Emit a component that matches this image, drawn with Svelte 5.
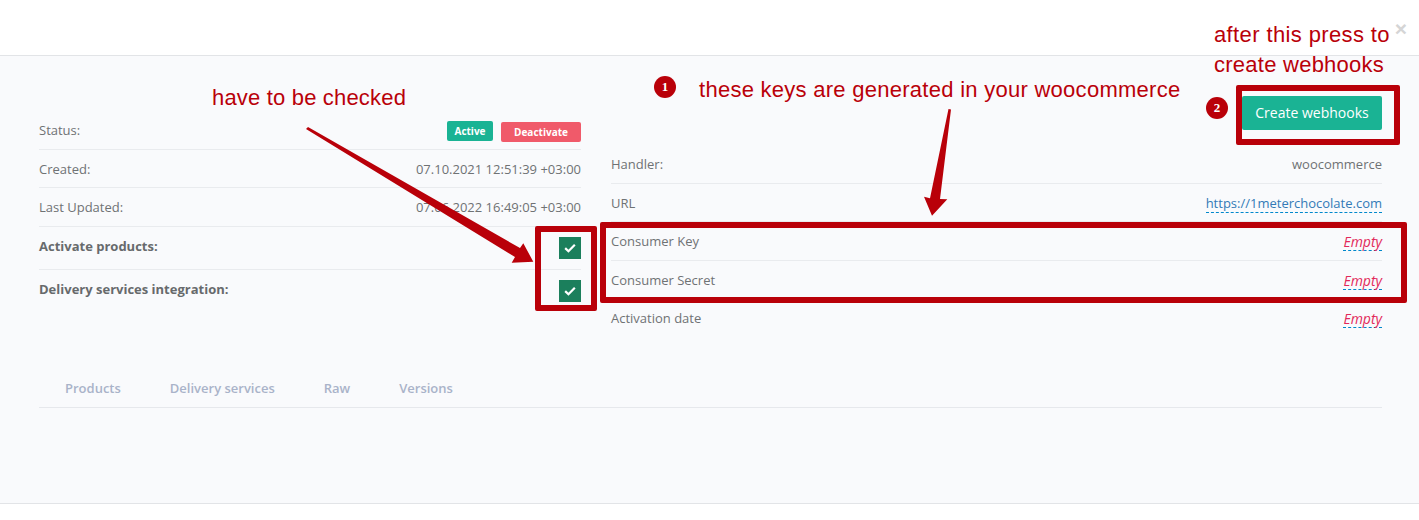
<script>
  const leftRows = [
    { label: "Created:", value: "07.10.2021 12:51:39 +03:00" },
    { label: "Last Updated:", value: "07.06.2022 16:49:05 +03:00" }
  ];
  const checks = ["Activate products:", "Delivery services integration:"];
  const emptyRows = ["Consumer Key", "Consumer Secret", "Activation date"];
  const tabs = ["Products", "Delivery services", "Raw", "Versions"];
</script>

<div class="modal">
  <header class="head">
    <button class="close">×</button>
  </header>

  <main class="body">
    <section class="info">
      <div class="col left">
        <div class="row">
          <span>Status:</span>
          <span class="badges">
            <span class="badge active">Active</span>
            <span class="badge deactivate">Deactivate</span>
          </span>
        </div>
        {#each leftRows as row}
          <div class="row">
            <span>{row.label}</span>
            <span>{row.value}</span>
          </div>
        {/each}
        {#each checks as label}
          <div class="row tall">
            <strong>{label}</strong>
            <span class="check">
              <svg width="12" height="10" viewBox="0 0 13 11">
                <path d="M1.2 5.600 L4.800 9 L11.800 1.800" fill="none" stroke="#fff" stroke-width="2.400" />
              </svg>
            </span>
          </div>
        {/each}
      </div>

      <div class="col right">
        <div class="actions">
          <button class="create">Create webhooks</button>
        </div>
        <div class="row">
          <span>Handler:</span>
          <span>woocommerce</span>
        </div>
        <div class="row">
          <span>URL</span>
          <span class="editable link">https://1meterchocolate.com</span>
        </div>
        {#each emptyRows as label}
          <div class="row">
            <span>{label}</span>
            <span class="editable empty">Empty</span>
          </div>
        {/each}
      </div>
    </section>

    <nav class="tabs">
      {#each tabs as tab}
        <span class="tab">{tab}</span>
      {/each}
    </nav>
  </main>

  <!-- annotations painted over the screenshot -->
  <svg class="arrows" width="1419" height="520" viewBox="0 0 1419 520">
    <path d="M306 129 L308 127 L520 248 L523.300 243.300 L533.300 261.700 L511.700 262.700 L515 257 Z" fill="#b90009" />
    <path d="M948.500 109 L951 109.500 L940 199 L947.300 199.300 L932 215.700 L924 196.700 L930 198.300 Z" fill="#b90009" />
  </svg>
  <div class="box box-checks"></div>
  <div class="box box-keys"></div>
  <div class="box box-create"></div>
  <span class="note note-checked">have to be checked</span>
  <span class="note note-keys">these keys are generated in your woocommerce</span>
  <span class="note note-after">after this press to<br /><span class="second">create webhooks</span></span>
  <span class="dot dot-1">1</span>
  <span class="dot dot-2">2</span>
</div>

<style>
  :global(body) {
    background: #fff;
  }

  .modal {
    position: relative;
    width: 1419px;
    height: 520px;
    overflow: hidden;
    font-family: "Open Sans", sans-serif;
    font-size: 13px;
    color: #676a6c;
  }

  .head {
    height: 55px;
    border-bottom: 1px solid #e2e4e7;
    display: flex;
    justify-content: flex-end;
  }

  .close {
    align-self: flex-start;
    margin: 18px 12px 0 0;
    padding: 0;
    border: 0;
    background: none;
    font-family: "Liberation Sans", sans-serif;
    font-size: 21px;
    line-height: 21px;
    font-weight: 700;
    color: #d5d5d5;
  }

  .body {
    height: 448px;
    box-sizing: border-box;
    border-bottom: 1px solid #e2e4e7;
    background: #f9fafc;
    padding: 40px 37px 0 39px;
  }

  .info {
    display: grid;
    grid-template-columns: 542px 771px;
    gap: 30px;
  }

  .left {
    padding-top: 15.250px;
  }

  .row {
    height: 38.500px;
    box-sizing: border-box;
    display: flex;
    align-items: center;
    justify-content: space-between;
    border-bottom: 1px solid #e9ebee;
    color: #6f7274;
  }

  .row:last-child {
    border-bottom-color: transparent;
  }

  .row.tall {
    height: 43px;
  }

  .row strong {
    margin-top: -4px;
    font-weight: 700;
    color: #676a6c;
  }

  .badges {
    display: flex;
    gap: 8px;
    align-items: flex-start;
    height: 21px;
    margin-top: 3px;
  }

  .badge {
    height: 20px;
    display: flex;
    align-items: center;
    justify-content: center;
    border-radius: 2px;
    color: #fff;
    font-size: 10px;
    font-weight: 700;
  }

  .active {
    width: 46px;
    background: #1ab394;
  }

  .deactivate {
    width: 80px;
    margin-top: 1px;
    background: #f05a6a;
  }

  .check {
    width: 22px;
    height: 22px;
    display: flex;
    align-items: center;
    justify-content: center;
    background: #1b7f5c;
  }

  .actions {
    display: flex;
    justify-content: flex-end;
    height: 49.250px;
  }

  .create {
    width: 140px;
    height: 34px;
    padding: 0 0 2px;
    border: 0;
    border-radius: 2px;
    background: #1ab394;
    color: #fff;
    font-family: inherit;
    font-size: 14px;
  }

  .editable {
    border-bottom: 1px dashed #08c;
    line-height: 17px;
    margin-top: 3px;
  }

  .link {
    color: #337ab7;
  }

  .empty {
    margin-top: 2px;
    color: #e2285a;
    font-style: italic;
    font-size: 14px;
  }

  .tabs {
    display: flex;
    height: 40px;
    margin-top: 30px;
    padding: 1px 0 0 1.500px;
    box-sizing: border-box;
    align-items: center;
    border-bottom: 1px solid #e6e8ec;
  }

  .tab {
    padding: 0 24.500px;
    font-weight: 600;
    color: #a9b3c9;
  }

  .arrows {
    position: absolute;
    left: 0;
    top: 0;
    pointer-events: none;
  }

  .box {
    position: absolute;
    box-sizing: border-box;
    border: 6px solid #b90009;
    border-radius: 2px;
  }

  .box-checks {
    left: 535px;
    top: 226px;
    width: 62px;
    height: 85px;
  }

  .box-keys {
    left: 600px;
    top: 222px;
    width: 807px;
    height: 81px;
  }

  .box-create {
    left: 1236px;
    top: 85px;
    width: 164px;
    height: 60px;
  }

  .note {
    position: absolute;
    font-family: "Liberation Sans", sans-serif;
    font-size: 22px;
    line-height: 30px;
    color: #b90009;
    white-space: nowrap;
  }

  .note-checked {
    left: 212px;
    top: 83px;
    letter-spacing: 0.180px;
  }

  .note-keys {
    left: 699px;
    top: 75px;
    letter-spacing: 0.270px;
  }

  .note-after {
    left: 1214px;
    top: 20px;
    letter-spacing: 0.380px;
  }

  .second {
    letter-spacing: 0.250px;
  }

  .dot {
    position: absolute;
    width: 22px;
    height: 22px;
    border-radius: 50%;
    display: flex;
    align-items: center;
    justify-content: center;
    background: #b90009;
    color: #fff;
    font-family: "Liberation Serif", serif;
    font-size: 13px;
    font-weight: 700;
  }

  .dot-1 {
    left: 654px;
    top: 76px;
  }

  .dot-2 {
    left: 1206px;
    top: 97px;
  }
</style>
